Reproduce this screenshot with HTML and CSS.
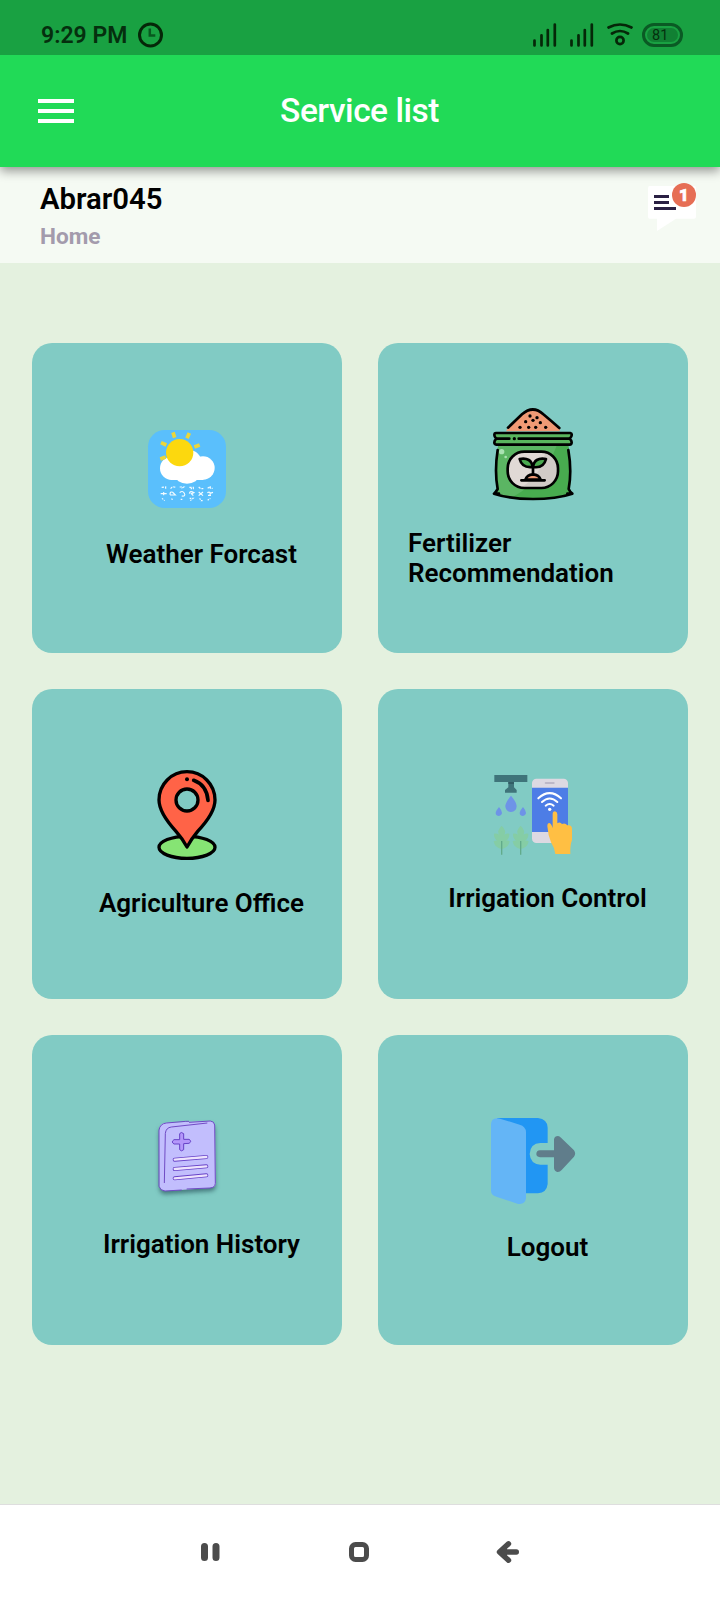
FILE: index.html
```html
<!DOCTYPE html>
<html lang="en">
<head>
<meta charset="utf-8">
<title>Service list</title>
<link rel="stylesheet" href="styles.css">
</head>
<body>
<div class="screen">
  <div class="status">
    <span class="time">9:29 PM</span>
    <svg class="clock" width="26" height="26" viewBox="0 0 26 26" fill="none"><circle cx="12.500" cy="13" r="11" stroke="#052708" stroke-width="3"/><path d="M11.800 6.500v7h5.500" stroke="#08581f" stroke-width="2.500"/></svg>
    <div class="indicators">
      <svg width="24" height="24" viewBox="0 0 24 24" stroke="#052708" stroke-width="2.7" stroke-linecap="round"><path d="M1.5 17.5v5M8.5 12.3v10.2M14.8 7v15.500M21.8 1.500v21"/></svg>
      <svg class="signal2" width="24" height="24" viewBox="0 0 24 24" stroke="#052708" stroke-width="2.7" stroke-linecap="round"><path d="M1.500 17.500v5M8.500 12.300v10.200M14.800 7v15.500M21.800 1.500v21"/></svg>
      <svg class="wifi" width="26" height="24" viewBox="0 0 26 24" fill="none" stroke="#052708" stroke-width="2.700" stroke-linecap="round"><path d="M1.500 4.500Q13 -1.500 24.500 4.500M5 10.500Q13 5.500 21 10.500"/><circle cx="13" cy="17.500" r="3.600" stroke-width="2.700"/></svg>
      <div class="battery"><span class="level">81</span></div>
    </div>
  </div>

  <header class="appbar">
    <div class="menu"><i></i><i></i><i></i></div>
    <h1>Service list</h1>
  </header>

  <section class="user">
    <div>
      <div class="name">Abrar045</div>
      <div class="place">Home</div>
    </div>
    <svg class="message" width="70" height="70" viewBox="0 0 210 210">
      <path d="M29 48H162Q168 48 168 54V140Q168 146 162 146H108L51 183V146H29Q24 146 24 140V54Q24 48 29 48Z" fill="#fff"/>
      <path d="M42 75H87V84H42ZM42 93H87V102H42ZM42 111H108V120H42Z" fill="#2a2043"/>
      <circle cx="132" cy="75" r="36" fill="#e66e55"/>
      <text class="badge" x="117" y="93">1</text>
    </svg>
  </section>

  <main class="grid">
    <div class="card weather">
      <svg class="icon" viewBox="-9 0 360 360">
        <rect x="54" y="60" width="234" height="234" rx="50" fill="#5abffc"/>
        <g fill="#fff"><circle cx="125" cy="175" r="35"/><circle cx="219" cy="174" r="35"/><circle cx="177" cy="158" r="38"/><ellipse cx="171" cy="196" rx="36" ry="25"/><rect x="122" y="165" width="98" height="45"/></g>
        <path d="M129 67L134 83M178 69L171 85M93 98L109 105M209 105L193 111M91 147L107 141" stroke="#ebd63b" stroke-width="11"/>
        <circle cx="149" cy="128" r="41" fill="#fcd80e"/>
        <g stroke="#f2fbff" stroke-width="3.500" fill="none">
          <path d="M95 232l12-1v6M122 236q4-8 14-4M149 231h12l-7 5M178 232h12v4h-8M206 231l6 5h8M233 235l8-6v6h7" stroke-dasharray="7 3"/>
          <path d="M92 251h18M101 246v10M120 254q0-11 8-7l8 8h-16M149 248q9-8 14 2t-8 8M178 251q2-11 14-3l-8 3 6 6M206 246l13 11M219 246l-13 11M232 248q11-5 8 8M240 250l9-3M234 256h9"/>
          <path d="M96 265l8 7M124 266l6 4M152 268h6M179 265h10l-8 7M209 265l4 7h5M233 271l8-6" stroke-dasharray="5 3"/>
        </g>
      </svg>
      <span class="label">Weather Forcast</span>
    </div>

    <div class="card fertilizer">
      <svg class="icon" viewBox="-21 -2 360 360" stroke="none" stroke-linecap="round" stroke-linejoin="round">
        <path d="M54 150H265Q278 220 269 280L278 295Q235 309 159 310Q85 309 40 295L51 280Q42 215 54 150Z" fill="#5bb563"/>
        <path d="M230 150H265Q278 220 269 280L278 295Q235 309 159 310Q125 310 98 304Q193 252 230 150Z" fill="#48ab4f"/>
        <path d="M78 107L84 97Q106 76 127 55Q159 27 190 55L239 97V107Z" fill="#f09a75"/>
        <path d="M84 96Q106 75 126 56Q159 27 190 56Q215 77 238 97" fill="none" stroke="#000" stroke-width="8"/>
        <g fill="#000"><circle cx="150" cy="61" r="5"/><circle cx="171" cy="66" r="5"/><circle cx="137" cy="78" r="5"/><circle cx="159" cy="74" r="5"/><circle cx="181" cy="81" r="5"/><circle cx="120" cy="95" r="5"/><circle cx="146" cy="95" r="5"/><circle cx="167" cy="95" r="5"/><circle cx="197" cy="95" r="5"/></g>
        <path d="M48 112H271Q276 113 275 119Q275 124 269 129Q275 134 275 140Q275 147 269 147H49Q43 146 43 140Q43 134 49 129Q43 124 43 118Q43 112 48 112Z" fill="#5ab55e" stroke="#000" stroke-width="8"/>
        <path d="M49 129H88M116 129H269" stroke="#000" stroke-width="8"/><circle cx="103" cy="129" r="5"/>
        <path d="M53 163Q43 227 53 280Q48 289 42 294Q91 310 159 310Q228 310 277 294Q270 289 266 280Q276 226 265 163M44 294H57M262 294H276" fill="none" stroke="#000" stroke-width="8"/>
        <circle cx="65" cy="168" r="8" fill="#a9e3b2"/><circle cx="77" cy="184" r="4" fill="#a9e3b2"/>
        <rect x="83" y="168" width="151" height="109" rx="50" fill="#e0d9d5"/>
        <path d="M195 173Q230 185 230 222Q229 270 181 273H127Q181 241 195 173Z" fill="#d1cbc7"/>
        <rect x="83" y="168" width="151" height="109" rx="50" fill="none" stroke="#000" stroke-width="8"/>
        <path d="M136 252Q141 237 159 236Q177 237 182 252Z" fill="#f09a75" stroke="#000" stroke-width="8"/>
        <path d="M158 214Q126 218 119 190Q154 184 158 214ZM159 214Q163 184 198 190Q191 219 159 214Z" fill="#4aaa50" stroke="#000" stroke-width="8"/>
        <path d="M159 212V235M124 254H194" stroke="#000" stroke-width="8"/>
      </svg>
      <span class="label">Fertilizer Recommendation</span>
    </div>

    <div class="card office">
      <svg class="icon" viewBox="-39 0 360 360" stroke="#000" stroke-width="10" stroke-linecap="round" stroke-linejoin="round">
        <ellipse cx="141" cy="277" rx="84" ry="33" fill="#86e474"/>
        <path fill-rule="evenodd" d="M141 276Q126 249 108 229Q57 173 57 135A84 85 0 0 1 225 135Q225 174 173 229Q156 249 141 276ZM108 135A33 33 0 1 0 174 135A33 33 0 1 0 108 135Z" fill="#ff6347"/>
        <path d="M161 76Q200 90 204 136" fill="none" stroke-width="11"/>
        <circle cx="141" cy="73" r="6" fill="#000" stroke="none"/>
      </svg>
      <span class="label">Agriculture Office</span>
    </div>

    <div class="card control">
      <svg class="icon" viewBox="-21 0 360 360">
        <path d="M43 45H142V66H102V82L110 90V98H75V90L85 82V66H43Z" fill="#3f747a"/><path d="M85 66H102V72H85Z" fill="#315d65"/>
        <path d="M93 107Q110 127 110 139Q109 155 93 156Q77 155 76 139Q76 127 93 107ZM57 141Q67 153 66 160Q64 168 57 168Q48 168 47 160Q47 153 57 141ZM129 141Q139 153 138 160Q136 168 129 168Q120 168 119 160Q119 153 129 141Z" fill="#6e93e7"/>
        <g fill="#85cda5"><path id="leaf" d="M65 197Q80 212 73 224Q80 219 88 221Q89 235 78 242Q84 241 89 244Q86 262 69 266H61Q44 262 41 244Q46 241 52 242Q41 235 42 221Q50 219 57 224Q50 212 65 197Z"/><use href="#leaf" x="57"/></g>
        <path d="M65 243V284M122 243V284" stroke="#62ab8b" stroke-width="4"/>
        <rect x="156" y="56" width="108" height="193" rx="13" fill="#ddd9e2"/>
        <path d="M156 83H264V216H156Z" fill="#4d7de6"/><rect x="194" y="66" width="30" height="6" rx="3" fill="#bdb8c8"/>
        <g fill="none" stroke="#fff" stroke-width="6" stroke-linecap="round"><path d="M175 115Q209 84 243 115M186 126Q209 105 232 126M197 137Q209 127 221 137"/></g><circle cx="209" cy="148" r="5" fill="#fff"/>
        <path d="M218 162Q218 154 225 154Q232 155 232 163V190Q240 184 246 192Q255 187 262 196Q276 194 276 207V240Q270 255 271 282H226Q224 264 213 247Q204 225 202 199Q202 189 208 189Q214 190 218 204Z" fill="#ffbf43"/>
      </svg>
      <span class="label">Irrigation Control</span>
    </div>

    <div class="card history">
      <svg class="icon" viewBox="-39 0 360 360">
        <path class="paper-shadow" d="M59 65Q64 53 82 53L207 48Q223 48 225 63L227 237Q226 248 210 249L75 258Q61 257 58 244L57 78Z" fill="#c2befd"/>
        <path d="M57 244V75Q60 56 79 54L137 49H147M147 52L211 48Q223 49 224 60L226 235Q225 248 210 249L140 252M125 255L75 258Q61 257 57 244M73 234L76 85Q78 68 94 66L202 54" fill="none" stroke="#704bc4" stroke-width="3"/>
        <path d="M119 86Q123 79 131 86V103H147Q157 109 147 115L131 116V134Q124 141 119 134V117H102Q92 111 102 104H119Z" fill="#b497fa" stroke="#6742c7" stroke-width="3"/>
        <g stroke="#6742c7" stroke-width="12" stroke-linecap="round"><path d="M104 164L199 156M104 192L199 184M104 220L199 211"/></g>
        <g stroke="#ede3fd" stroke-width="7" stroke-linecap="round"><path d="M104 164L199 156M104 192L199 184M104 220L199 211"/></g>
      </svg>
      <span class="label">Irrigation History</span>
    </div>

    <div class="card logout">
      <svg class="icon" viewBox="-21 0 360 360">
        <path d="M51 39H174Q202 42 203 68V114H181Q151 115 149 147Q151 177 181 179H203V237Q200 263 174 265H137Z" fill="#2196f3"/>
        <path d="M33 58Q34 35 60 41L119 59Q137 64 138 81V280Q135 300 112 296L49 275Q33 270 33 257Z" fill="#64b5f6"/>
        <path d="M180 136H222V103Q224 93 234 93Q239 94 243 98L282 136Q289 146 282 155L245 195Q239 202 232 201Q224 200 222 190V157H180Q169 155 169 147Q169 137 180 136Z" fill="#607d8b"/>
      </svg>
      <span class="label">Logout</span>
    </div>
  </main>

  <nav class="sysnav">
    <svg width="320" height="24" viewBox="0 0 320 24" fill="none" stroke="#4c4c4c" stroke-linecap="round" stroke-linejoin="round">
      <path d="M4.500 6.400v11.200M16 6.400v11.200" stroke-width="7"/>
      <rect x="151.500" y="4.500" width="15" height="15" rx="4" stroke-width="5"/>
      <path d="M308.500 3.800L299.500 12L308.500 20.200M300.500 12H316.300" stroke-width="5.400"/>
      <path d="M300 12L307 7V17Z" fill="#4c4c4c" stroke="none"/>
    </svg>
  </nav>
</div>
</body>
</html>
```

FILE: styles.css
```css
* { box-sizing: border-box; }

body {
  margin: 0;
  font-family: Roboto, "Liberation Sans", sans-serif;
}

.screen {
  width: 720px;
  height: 1600px;
  display: flex;
  flex-direction: column;
  background: #e4f1df;
  overflow: hidden;
}

.status {
  height: 55px;
  flex: none;
  display: flex;
  align-items: flex-start;
  padding: 22px 37px 0 41px;
  background: #19a142;
  color: #052f0e;
  z-index: 2;
}

.time {
  width: 97px;
  font-size: 23px;
  font-weight: 600;
  line-height: 28px;
  white-space: nowrap;
}

.indicators {
  display: flex;
  margin-left: auto;
  padding-top: 1px;
}

.signal2 { margin-left: 13px; }
.wifi { margin-left: 13px; }

.battery {
  width: 41px;
  height: 24px;
  margin-left: 9px;
  padding: 2px;
  border: 3px solid #0a5a24;
  border-radius: 12px;
}

.level {
  display: block;
  width: 31px;
  height: 14px;
  padding-left: 5px;
  border-radius: 7px;
  background: #118033;
  color: #052f0e;
  font-size: 14.5px;
  line-height: 15px;
}

.appbar {
  height: 112px;
  flex: none;
  display: flex;
  align-items: center;
  padding: 0 38px;
  background: #21da57;
  box-shadow: 0 4px 10px rgba(0, 0, 0, .4);
  z-index: 1;
}

.menu {
  width: 36px;
  display: flex;
  flex-direction: column;
  gap: 6px;
}

.menu i { height: 4px; background: #fff; }

h1 {
  flex: 1;
  margin: 0 37px 0 0;
  color: #fff;
  font-size: 33.5px;
  font-weight: 500;
  line-height: 38px;
  letter-spacing: -.5px;
  text-align: center;
}

.user {
  height: 96px;
  flex: none;
  display: flex;
  justify-content: space-between;
  padding: 3px 10px 0 40px;
  background: #f5faf3;
}

.name {
  padding-top: 11px;
  font-size: 29.3px;
  font-weight: 600;
  line-height: 36px;
}

.place {
  padding-top: 7px;
  color: #a39bac;
  font-size: 22.6px;
  font-weight: 700;
  line-height: 26px;
}

.badge {
  fill: #fff;
  stroke: #fff;
  stroke-width: 2;
  font-size: 50px;
  font-weight: 900;
}

.grid {
  flex: 1;
  display: grid;
  grid-template-columns: 310px 310px;
  grid-auto-rows: 310px;
  gap: 36px;
  padding: 80px 32px 0;
}

.card {
  display: flex;
  flex-direction: column;
  align-items: center;
  border-radius: 20px;
  background: #81cbc4;
}

.icon { width: 120px; height: 120px; flex: none; }

.label {
  margin-left: 29px;
  font-size: 26px;
  font-weight: 600;
  line-height: 30px;
}

.weather { padding-top: 67px; }
.weather .label { margin-top: 9px; }
.fertilizer { padding-top: 52px; }
.fertilizer .label { margin-top: 13px; padding-left: 1px; }
.office { padding-top: 66px; }
.office .label { margin-top: 13px; }
.control { padding-top: 71px; }
.control .label { margin-top: 3px; }
.history { padding-top: 70px; }
.history .label { margin-top: 4px; }
.logout { padding-top: 70px; }
.logout .label { margin-top: 7px; }

.paper-shadow { filter: drop-shadow(0 10px 6px rgba(30, 70, 80, .6)); }

.sysnav {
  height: 96px;
  flex: none;
  padding: 35px 0 0 200px;
  border-top: 1px solid #dedede;
  background: #fff;
}
```
